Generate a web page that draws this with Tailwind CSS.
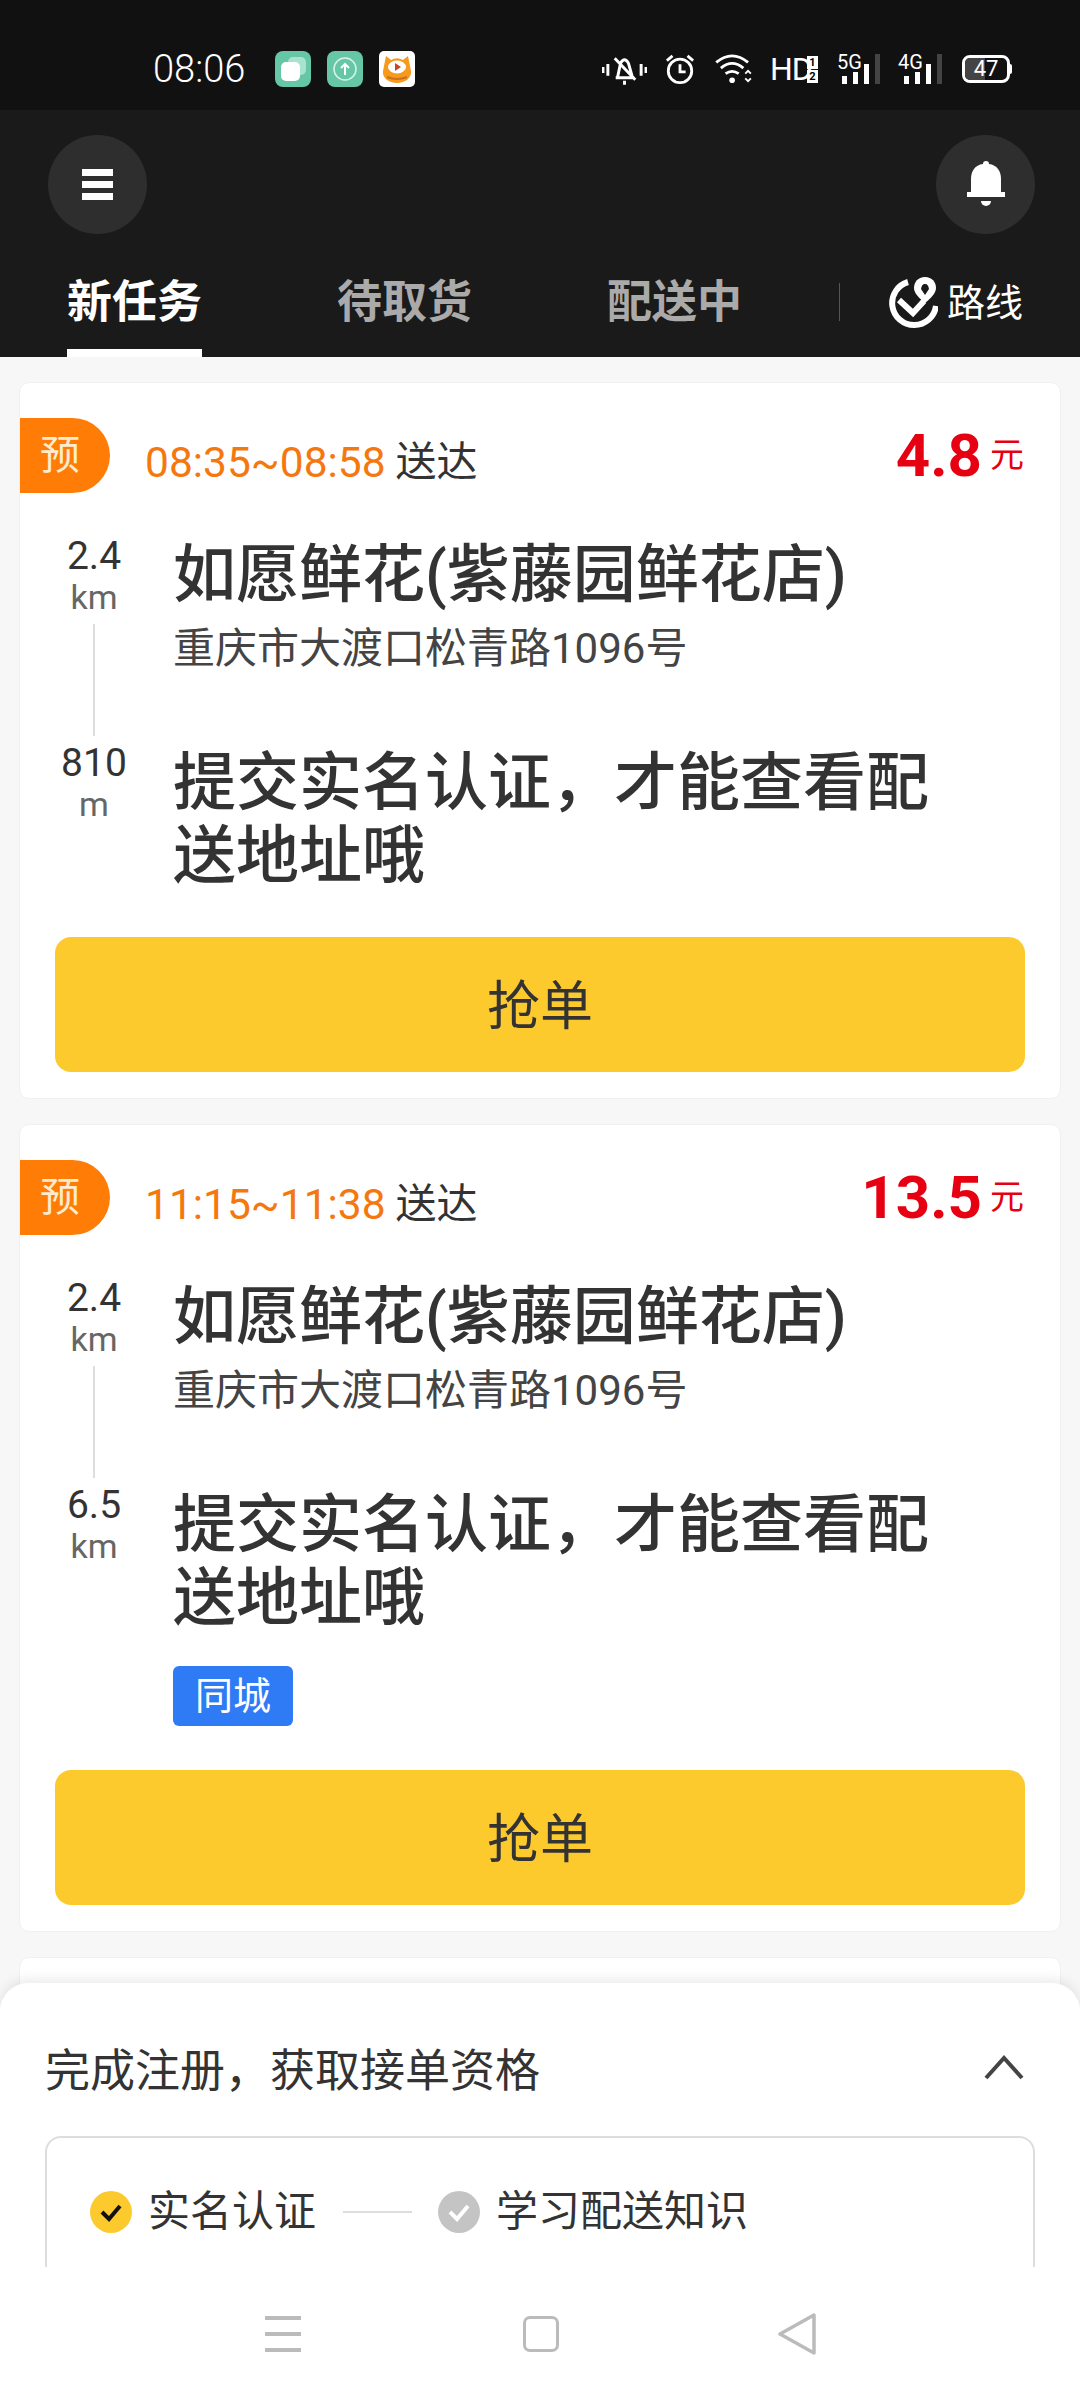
<!DOCTYPE html>
<html lang="zh">
<head>
<meta charset="UTF-8">
<meta name="viewport" content="width=device-width, initial-scale=1.0">
<script src="https://cdn.jsdelivr.net/npm/@tailwindcss/browser@4"></script>
<title>新任务</title>
</head>
<body class="bg-[#f7f7f7]">
<div class="relative h-[2400px] w-[1080px] overflow-hidden font-['Roboto','Noto_Sans_CJK_SC',sans-serif] text-[#333]">

  <!-- status bar -->
  <div class="flex h-[110px] items-center bg-[#111] pl-[153px] pr-[68px] pt-[28px] text-white">
    <span class="w-[94px] text-[38px] leading-none font-light">08:06</span>
    <div class="ml-[28px] flex gap-[16px]">
      <svg class="h-[36px] w-[36px]" viewBox="0 0 36 36"><rect width="36" height="36" rx="8" fill="#66c7a6"/><rect x="13" y="6" width="18" height="18" rx="5" fill="#a9e2cf"/><rect x="6" y="11" width="19" height="19" rx="5" fill="#fff"/></svg>
      <svg class="h-[36px] w-[36px]" viewBox="0 0 36 36"><rect width="36" height="36" rx="8" fill="#66c7a6"/><circle cx="18" cy="18" r="11" fill="none" stroke="#d7f2e8" stroke-width="1.5"/><path d="M18 24V13M14 17l4-4 4 4" fill="none" stroke="#fff" stroke-width="2"/></svg>
      <svg class="h-[36px] w-[36px]" viewBox="0 0 36 36"><rect width="36" height="36" rx="5" fill="#fff"/><path d="M7 5l5 4a12 12 0 0 1 12 0l5-4 3 15c1 7-6 12-14 12S3 27 4 20z" fill="#f59a1c"/><ellipse cx="18" cy="16" rx="9" ry="6.5" fill="#fff"/><path d="M16 12l6 4-6 4z" fill="#c9442a"/><path d="M8 26q10 4 20 0" fill="none" stroke="#c9701a" stroke-width="2"/></svg>
    </div>
    <div class="ml-auto flex items-center">
      <svg class="h-[34px] w-[45px]" viewBox="0 0 46 34" fill="none" stroke="#fff" stroke-width="3"><path d="M1 15v6M6 12v12M40 12v12M45 15v6"/><path d="M14 26h19M16 25l3-14q4-7 8 0l4 14M13 6l21 22M23 29v4"/></svg>
      <svg class="ml-[18px] h-[30px] w-[30px]" viewBox="0 0 32 32" fill="none" stroke="#fff" stroke-width="3"><circle cx="16" cy="18" r="12.5"/><path d="M16 11v8h6M2 7l6-5M30 7l-6-5"/></svg>
      <svg class="ml-[20px] h-[30px] w-[38px]" viewBox="0 0 40 32" fill="none" stroke="#fff" stroke-width="3"><path d="M1 9q17-14 34 0M6 15q12-10 24 0M11 21q7-5 14 0"/><circle cx="18" cy="28" r="3" fill="#fff" stroke="none"/><path d="M32 21l3-3 3 3M32 26l3 3 3-3" stroke-width="2"/></svg>
      <span class="ml-[17px] w-[37px] text-[32px] leading-none font-normal tracking-[-1px]">HD</span>
      <div class="flex w-[11px] flex-col gap-px text-center text-[11px] leading-[13px] font-bold text-black">
        <span class="bg-white">1</span><span class="bg-white">2</span>
      </div>
      <div class="relative ml-[19px] flex h-[30px] w-[43px] items-end gap-[6px] pl-[5px]">
        <span class="absolute -top-[2px] left-0 text-[20px] leading-none">5G</span>
        <i class="h-[8px] w-[5px] bg-white"></i><i class="h-[12px] w-[5px] bg-white"></i><i class="h-[20px] w-[5px] bg-white"></i><i class="h-[30px] w-[5px] bg-[#444]"></i>
      </div>
      <div class="relative ml-[18px] flex h-[30px] w-[44px] items-end gap-[6px] pl-[6px]">
        <span class="absolute -top-[2px] left-0 text-[20px] leading-none">4G</span>
        <i class="h-[8px] w-[5px] bg-white"></i><i class="h-[12px] w-[5px] bg-white"></i><i class="h-[20px] w-[5px] bg-white"></i><i class="h-[30px] w-[5px] bg-[#444]"></i>
      </div>
      <div class="relative ml-[20px] flex h-[28px] w-[48px] items-center justify-center overflow-hidden rounded-[8px] border-[3px] border-white text-[22px] leading-none">
        <i class="absolute inset-y-0 left-0 w-[20px] bg-[#444]"></i><span class="relative">47</span>
      </div>
      <i class="h-[10px] w-[2px] rounded-r-full bg-white"></i>
    </div>
  </div>

  <!-- header -->
  <div class="h-[247px] bg-[#1a1a1a]">
    <div class="flex justify-between px-[48px] pt-[25px] pr-[45px]">
      <div class="flex h-[99px] w-[99px] flex-col items-center justify-center gap-[5px] rounded-full bg-[#2e2e2e]">
        <i class="h-[7px] w-[31px] bg-white"></i><i class="h-[7px] w-[31px] bg-white"></i><i class="h-[7px] w-[31px] bg-white"></i>
      </div>
      <div class="flex h-[99px] w-[99px] items-center justify-center rounded-full bg-[#2e2e2e]">
        <svg class="h-[48px] w-[38px]" viewBox="0 0 38 48" fill="#fff"><path d="M16 3a3 3 0 0 1 6 0c8 1 12 7 12 15v13H4V18C4 10 8 4 16 3z"/><rect y="31" width="38" height="5"/><path d="M14 40h10a5 5 0 0 1-10 0z"/></svg>
      </div>
    </div>
    <div class="relative mt-[23px] flex h-[100px] items-start text-[45px] leading-[92px] font-bold">
      <div class="absolute left-[67px] flex h-[100px] w-[135px] flex-col items-center justify-between text-white">
        <span>新任务</span><i class="h-[9px] w-[135px] bg-white"></i>
      </div>
      <span class="absolute left-[337px] text-[#aaa]">待取货</span>
      <span class="absolute left-[607px] text-[#aaa]">配送中</span>
      <i class="absolute top-[26px] left-[839px] h-[38px] w-px bg-[#555]"></i>
      <div class="absolute left-[888px] flex items-center text-[38px] font-normal text-white">
        <svg class="h-[54px] w-[50px]" viewBox="0 0 50 54" fill="none" stroke="#fff" stroke-width="6"><path d="M20 6a22 22 0 1 0 28 24"/><path d="M11 24l14 13 11-12"/><path d="M37 1c-7 0-11 5-11 11 0 5 5 10 11 15 6-5 11-10 11-15 0-6-4-11-11-11z" fill="#fff" stroke="none"/><path d="M37 8a4 7 0 0 0-4 5l4 6 4-6a4 7 0 0 0-4-5z" fill="#1a1a1a" stroke="none"/></svg>
        <span class="ml-[9px]">路线</span>
      </div>
    </div>
  </div>

  <!-- task list -->
  <div class="flex flex-col gap-[25px] px-[19px] pt-[25px]">

    <div class="rounded-[10px] border border-[#f0f0f0] bg-white pt-[35px] pb-[26px]">
      <div class="flex h-[75px] items-center pr-[36px]">
        <span class="flex h-[75px] w-[90px] items-center justify-center rounded-r-full bg-[#ff7d06] pr-[10px] text-[40px] text-[#ffeccf]">预</span>
        <span class="mt-[15px] ml-[35px] text-[42.5px] text-[#f5780f]">08:35~08:58</span>
        <span class="mt-[15px] ml-[10px] text-[41px]">送达</span>
        <span class="ml-auto text-[60px] leading-none font-bold text-[#e60012]">4.8</span>
        <span class="ml-[8px] text-[34px] text-[#e60012]">元</span>
      </div>
      <div class="mt-[41px] flex">
        <div class="flex w-[150px] flex-col items-center pr-[2px]">
          <span class="text-[39px] leading-[44px]">2.4</span>
          <span class="text-[34px] leading-[38px] text-[#666]">km</span>
          <i class="mt-[8px] h-[112px] w-[2px] bg-[#ddd]"></i>
          <span class="mt-[5px] text-[39px] leading-[44px]">810</span>
          <span class="text-[34px] leading-[38px] text-[#666]">m</span>
        </div>
        <div class="w-[800px] pt-[5px] pl-[3px]">
          <div class="text-[63px] leading-[72px] font-medium">如愿鲜花(紫藤园鲜花店)</div>
          <div class="mt-[13px] text-[42px] leading-[50px] text-[#444]">重庆市大渡口松青路1096号</div>
          <div class="mt-[72px] text-[63px] leading-[73px] font-medium">提交实名认证，才能查看配送地址哦</div>
        </div>
      </div>
      <div class="mx-[35px] mt-[45px] flex h-[135px] items-center justify-center rounded-[16px] bg-[#fdca2e] pt-[6px] text-[53px]">抢单</div>
    </div>

    <div class="rounded-[10px] border border-[#f0f0f0] bg-white pt-[35px] pb-[26px]">
      <div class="flex h-[75px] items-center pr-[36px]">
        <span class="flex h-[75px] w-[90px] items-center justify-center rounded-r-full bg-[#ff7d06] pr-[10px] text-[40px] text-[#ffeccf]">预</span>
        <span class="mt-[15px] ml-[35px] text-[42.5px] text-[#f5780f]">11:15~11:38</span>
        <span class="mt-[15px] ml-[10px] text-[41px]">送达</span>
        <span class="ml-auto text-[60px] leading-none font-bold text-[#e60012]">13.5</span>
        <span class="ml-[8px] text-[34px] text-[#e60012]">元</span>
      </div>
      <div class="mt-[41px] flex">
        <div class="flex w-[150px] flex-col items-center pr-[2px]">
          <span class="text-[39px] leading-[44px]">2.4</span>
          <span class="text-[34px] leading-[38px] text-[#666]">km</span>
          <i class="mt-[8px] h-[112px] w-[2px] bg-[#ddd]"></i>
          <span class="mt-[5px] text-[39px] leading-[44px]">6.5</span>
          <span class="text-[34px] leading-[38px] text-[#666]">km</span>
        </div>
        <div class="w-[800px] pt-[5px] pl-[3px]">
          <div class="text-[63px] leading-[72px] font-medium">如愿鲜花(紫藤园鲜花店)</div>
          <div class="mt-[13px] text-[42px] leading-[50px] text-[#444]">重庆市大渡口松青路1096号</div>
          <div class="mt-[72px] text-[63px] leading-[73px] font-medium">提交实名认证，才能查看配送地址哦</div>
          <div class="mt-[32px] flex h-[60px] w-[120px] items-center justify-center rounded-[6px] bg-[#2f7bf5] text-[38px] text-white">同城</div>
        </div>
      </div>
      <div class="mx-[35px] mt-[44px] flex h-[135px] items-center justify-center rounded-[16px] bg-[#fdca2e] pt-[6px] text-[53px]">抢单</div>
    </div>

    <div class="h-[200px] rounded-[10px] border border-[#f0f0f0] bg-white"></div>
  </div>

  <!-- registration sheet -->
  <div class="absolute inset-x-0 bottom-0 flex h-[417px] flex-col overflow-hidden rounded-t-[28px] bg-white shadow-[0_-4px_12px_rgba(0,0,0,0.08)]">
    <div class="flex h-[153px] shrink-0 items-center justify-between pt-[24px] pr-[56px] pl-[45px]">
      <span class="text-[45px]">完成注册，获取接单资格</span>
      <svg class="mb-[9px] h-[26px] w-[40px]" viewBox="0 0 40 26" fill="none" stroke="#444" stroke-width="4"><path d="M2 24L20 4l18 20"/></svg>
    </div>
    <div class="mx-[45px] flex h-[131px] shrink-0 items-start rounded-t-[16px] border-x-2 border-t-2 border-[#ddd] pt-[53px] pl-[43px]">
      <svg class="h-[42px] w-[42px]" viewBox="0 0 42 42"><circle cx="21" cy="21" r="21" fill="#fdca2e"/><path d="M12 21l7 7 11-13" fill="none" stroke="#111" stroke-width="4"/></svg>
      <span class="ml-[16px] text-[42px] leading-[42px]">实名认证</span>
      <i class="mt-[20px] ml-[27px] h-[2px] w-[69px] bg-[#ddd]"></i>
      <svg class="ml-[26px] h-[42px] w-[42px]" viewBox="0 0 42 42"><circle cx="21" cy="21" r="21" fill="#c4c4c4"/><path d="M12 21l7 7 11-13" fill="none" stroke="#fff" stroke-width="4"/></svg>
      <span class="ml-[16px] text-[42px] leading-[42px]">学习配送知识</span>
    </div>
    <!-- navigation bar -->
    <div class="flex h-[133px] items-center justify-center bg-white">
      <div class="flex w-[36px] flex-col gap-[12px]"><i class="h-[4px] bg-[#bbb]"></i><i class="h-[4px] bg-[#bbb]"></i><i class="h-[4px] bg-[#bbb]"></i></div>
      <div class="ml-[222px] h-[36px] w-[36px] rounded-[7px] border-[3.5px] border-[#bbb]"></div>
      <svg class="ml-[219px] h-[42px] w-[38px]" viewBox="0 0 38 42" fill="none" stroke="#bbb" stroke-width="3.5" stroke-linejoin="round"><path d="M36 2v38L2 21z"/></svg>
    </div>
  </div>
</div>
</body>
</html>
